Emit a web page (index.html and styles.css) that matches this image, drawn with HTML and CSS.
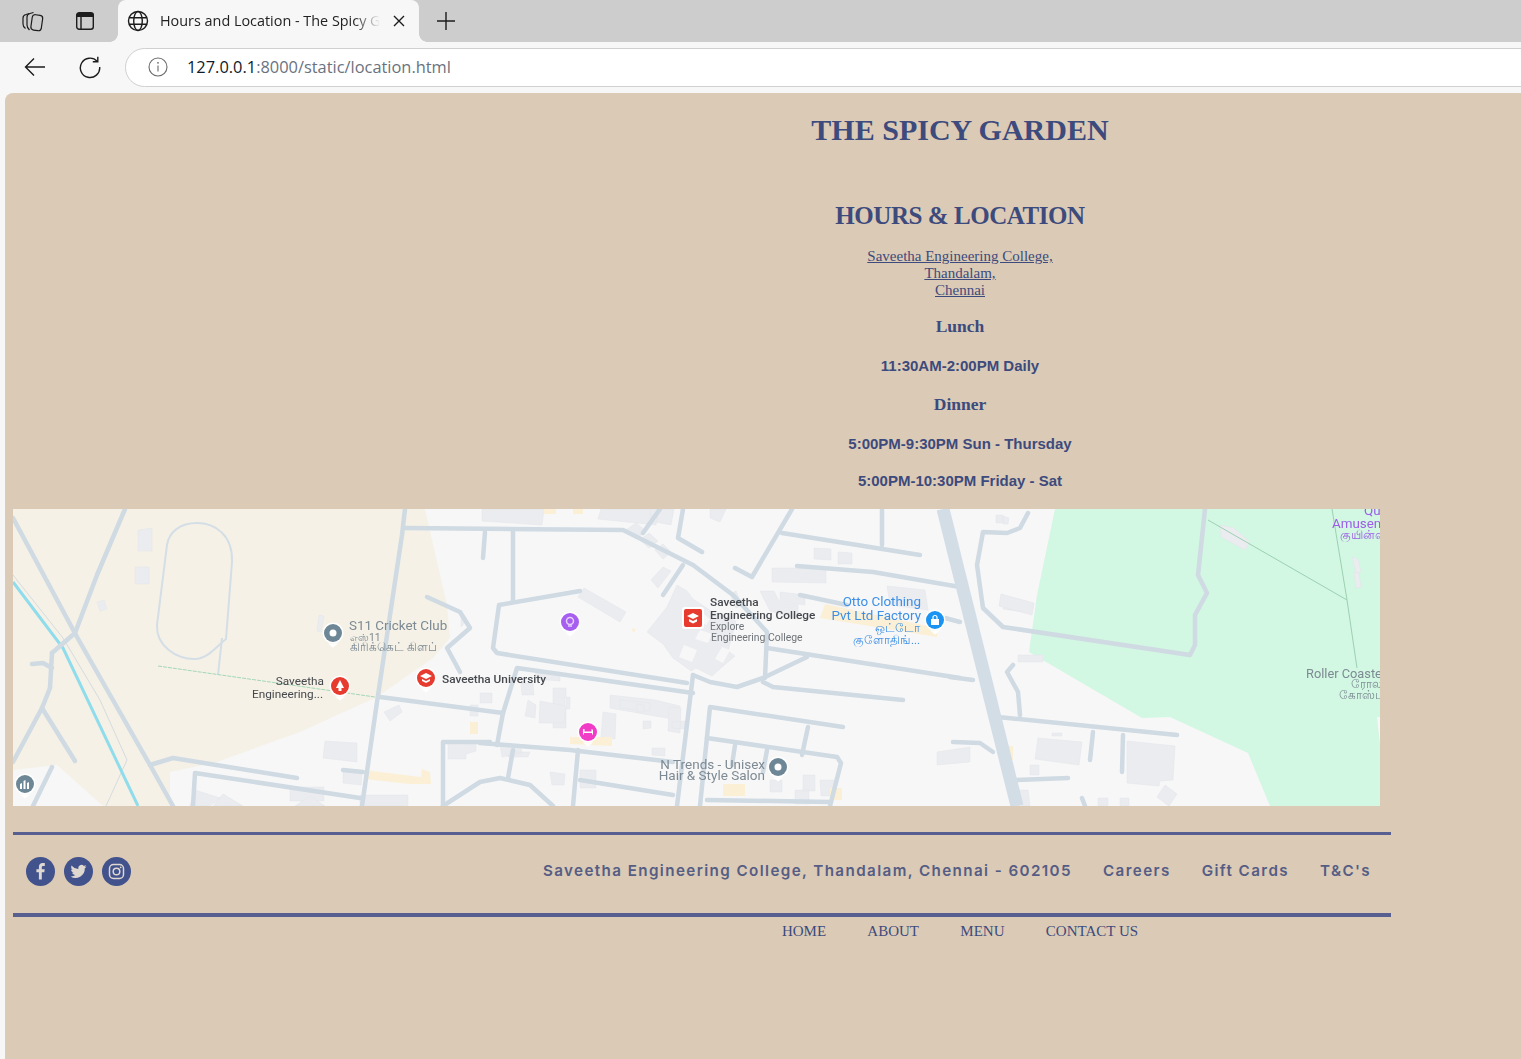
FILE: index.html
```html
<!DOCTYPE html>
<html lang="en">
<head>
<meta charset="utf-8">
<title>Hours and Location - The Spicy Garden</title>
<link rel="stylesheet" href="styles.css">
</head>
<body>
<header class="browser">
  <div class="tabstrip">
    <button class="strip-btn strip-btn-first" aria-label="Collections">
      <svg width="24" height="24" viewBox="0 0 24 24" class="ico thinline"><path d="M9.500 4.500L6 5.500C4 6 3 7.500 3 9v6c0 2 1 3.500 2.500 4.500"/><path d="M13.500 3.500L10 4.500C8 5 7 6.500 7 8v8c0 2 1 3.500 2.500 5"/><rect x="11.500" y="6" width="10.500" height="15.500" rx="3" transform="rotate(8 17 14)"/></svg>
    </button>
    <button class="strip-btn" aria-label="Tab actions">
      <svg width="24" height="24" viewBox="0 0 24 24" class="ico"><rect x="3.700" y="3.700" width="16.600" height="16.600" rx="2.500"/><path d="M5 4h14a1.500 1.500 0 0 1 1.500 1.500V8h-17V5.500A1.500 1.500 0 0 1 5 4z" class="fill"/><path d="M8 8v12"/></svg>
    </button>
    <div class="tab">
      <svg width="22" height="22" viewBox="0 0 22 22" class="ico globe"><circle cx="11" cy="11" r="9.500"/><ellipse cx="11" cy="11" rx="4.300" ry="9.500"/><path d="M2 7.800h18M2 14.200h18"/></svg>
      <span class="tab-title">Hours and Location - The Spicy Garden</span>
      <svg width="12" height="12" viewBox="0 0 12 12" class="ico close"><path d="M1 1l10 10M11 1L1 11"/></svg>
    </div>
    <svg width="20" height="20" viewBox="0 0 20 20" class="ico plus"><path d="M10 1v18M1 10h18"/></svg>
  </div>
  <div class="toolbar">
    <svg width="24" height="24" viewBox="0 0 24 24" class="ico back"><path d="M22 12H2.500M11 3.500L2.500 12l8.500 8.500"/></svg>
    <svg width="24" height="24" viewBox="0 0 24 24" class="ico reload"><path d="M19.200 6.300A9.700 9.700 0 1 0 21.700 12"/><path d="M19.800 1.800v5h-5"/></svg>
    <div class="omnibox">
      <svg width="20" height="20" viewBox="0 0 20 20" class="info"><circle cx="10" cy="10" r="9"/><path d="M10 8.500v6"/><circle class="dot" cx="10" cy="5.800" r="0.900"/></svg>
      <span class="url"><b class="host">127.0.0.1</b>:8000/static/location.html</span>
    </div>
  </div>
</header>

<div class="viewport">
  <main class="page">
    <h1 class="brand">THE SPICY GARDEN</h1>
    <h2 class="title">HOURS &amp; LOCATION</h2>
    <p class="address"><a href="#">Saveetha Engineering College,<br>Thandalam,<br>Chennai</a></p>
    <h3 class="meal meal-lunch">Lunch</h3>
    <p class="hours hours-lunch">11:30AM-2:00PM Daily</p>
    <h3 class="meal meal-dinner">Dinner</h3>
    <p class="hours hours-dinner">5:00PM-9:30PM Sun - Thursday</p>
    <p class="hours hours-last">5:00PM-10:30PM Friday - Sat</p>

    <svg class="map" width="1367" height="297" viewBox="13 509 1367 297" role="img" aria-label="Map">
      <defs>
        <g id="drop"><path d="M0 14.500l-5-4h10z" fill="#fff"/><circle r="10.500" fill="#fff"/></g>
      </defs>
      <rect x="13" y="509" width="1367" height="297" fill="#f7f7f8"/>
      <path class="land" d="M13 509H425L447 605 450 638 433 658 377 697 300 732 217 762 170 772V806H103L57 765 13 770z"/>
      <path class="park" d="M1055 509H1380V806H1270L1248 753 1170 717 1142 718 1029 652 1037 595z"/>
      <path fill="#f7f7f8" d="M1377 717l3 28v-28z"/>

      <g class="bld">
        <path d="M138 530l14-2v23h-14zM135 567h14v17h-14zM97 602l7-2 3 9-7 2zM319 615l5 1-3 16-4-1z"/>
        <path d="M325 741l32 2 0 19-34-4zM290 787h34v14h-34zM343 770l19 3-1 12-18-2z"/>
        <path d="M360 795h48v11h-48zM195 790l25 8-10 8h-20zM213 806l10-12 20 12zM295 806l15-10 15 10z"/>
        <path d="M448 742h28v9l-10 3v5h-18zM384 712l15-7 3 7-12 9zM470 705h8v11h-8zM461 618l5 3-5 6z"/>
        <path d="M482 509h62l-2 16-60-4zM601 509h57l-2 16-58-6zM650 509h24l-3 16-20-4zM710 509h16l-6 13-10-4z"/>
        <path d="M578 597l6-9 42 24-6 10zM651 580l12-13 8 4-13 17zM626 530l10-7 10 8-10 8zM640 540l9-7 9 8-9 7zM655 550l8-6 8 8-8 7z"/>
        <path d="M772 568h54v15l-54-1zM814 548l17 1v11l-17-1zM838 552l14 1v11h-14z"/>
        <path d="M647 632l20-25 10-22 10 6 6 8 18 12 25 10-8 30 7 5-14 12-9 8-16-8-5 3-18-13-10-14z"/>
        <path d="M730 594l6-3 6 14-6 3zM760 591h14l6 12 18 2 0 14-28-8zM780 592l25 3 0 10-25-3zM1006 599l28 5-3 9-28-4z"/>
        <path d="M1018 655l25 0 0 7-25 0z"/>
        <path d="M521 683h12l1 12h-12zM535 672h25v9l-24-2zM480 693h12v10h-12zM528 700l8 5-1 13-10-2zM553 688h13v40h-13zM570 697h-5v12h5z"/>
        <path d="M610 695l45 5 25 6-1 14-30-5-39-7zM603 712l13 2-1 25-14-2zM540 701l26 5-2 17h-25zM620 700l30 3 0 8-30-3z"/>
        <path d="M669 707l12 1-1 25-12-2zM637 704l7 1v7h-7zM643 721h8v7l-8 1zM672 722l13-1v8l-13-1zM652 748h13v8l-13-1z"/>
        <path d="M580 770h16v18h-16zM500 745h20l2 8-20 4zM510 752l20 0-2 5-20 0zM550 772l15 2-1 11h-12z"/>
        <path d="M770 780l12 0v12h-12zM803 775l12 0v16h-12zM820 780l14 0-1 16-12 0zM795 790l14 0 0 14-14 0z"/>
        <path d="M1038 738l44 4-3 23-44-6zM1127 741l48 5-2 34-13 1-1 5-22-2-10-1zM1165 785l12 9-8 12-12-9z"/>
        <path d="M1030 765l9 0v10h-9zM1014 790h14l2 16-15 0zM1098 798h10v8h-10zM1120 798h9v8h-9zM1052 733h10v3h-10z"/>
        <path d="M937 752l33-5 0 15-33 3z"/><path d="M1220 525l14 3 16 14-5 8-24-13zM1352 557l6 2 3 13-5 1zM1354 572l5 1 2 14-5 1z"/>
        <path d="M996 515l7 0 0 8-7 0zM1003 516l6 2-1 6-5 0z"/>
        <path d="M887 586l38 4 3 20-38-5z"/>
        <path d="M1001 594l33 9-2 12-33-9z"/>
      </g>
      <path class="cutout" d="M684 645l13 5-5 12-13-5zM700 630l12 4-4 9-13-4zM722 647l8 3-7 13-8-4zM700 611l10 8-4 6-10-6z"/>

      <g class="yellow">
        <path d="M470 722h8v12h-8zM364 779l45 5 22 0-1-12-8-3-1 8-57-7zM544 509h12v5h-12zM573 509h10v5h-10zM570 737h42v9l-42-2zM723 784h22v12h-22zM820 618l5-14 112 24 0 9zM999 748l5-2 0 9-5 0zM1005 746h8v14h-8z"/>
        <path d="M830 788h12v12h-12zM631 628l5 1-2 4z"/>
      </g>

      <polyline class="thin" points="13,575 63,638 100,700 127,760 106,806"/>
      <polyline class="river" points="13,582 63,648 138,806"/>

      <path class="track" d="M197 523C180 523 169 532 167 545L157 625C156 645 175 659 195 659 208 659 218 645 226 639L232 562C233 535 215 523 197 523z"/>
      <polyline class="track" points="222,638 218,675"/>
      <polyline class="trail" points="158,666 375,697"/>
      <polyline class="trail solid" points="1208,520 1347,600"/>
      <polyline class="trail solid" points="1332,509 1347,600 1357,668"/>

      <g class="roads">
        <polyline points="13,518 77,637 150,765 173,806"/>
        <polyline points="125,509 97,575 75,633 52,653"/>
        <polyline points="52,653 50,688 42,708 13,762"/>
        <polyline points="32,664 43,663 52,668"/>
        <polyline points="42,708 75,761"/>
        <polyline points="52,767 33,806"/>
        <polyline points="405,509 402,535 377,702 362,806"/>
        <polyline points="405,528 623,530 693,565 733,595 767,632 765,678"/>
        <polyline points="380,697 503,713"/>
        <polyline points="503,713 517,668 693,693"/>
        <polyline points="503,713 497,745"/>
        <polyline points="687,683 497,653 493,648 499,605 580,591"/>
        <polyline points="513,532 513,602"/>
        <polyline points="485,532 483,558"/>
        <polyline points="693,675 677,806"/>
        <polyline points="693,675 710,682 737,687 763,678 807,657"/>
        <polyline points="767,648 960,678"/>
        <polyline points="763,682 773,687 903,700"/>
        <polyline points="843,727 710,707 700,806"/>
        <polyline points="707,738 837,757 841,763 830,806"/>
        <polyline points="808,727 802,755"/>
        <polyline points="735,745 732,765"/>
        <polyline points="767,750 763,772"/>
        <polyline points="480,743 570,750 673,762"/>
        <polyline points="578,750 573,806"/>
        <polyline points="580,780 673,795"/>
        <polyline points="513,750 508,778"/>
        <polyline points="443,806 443,742 490,742"/>
        <polyline points="443,806 480,782 500,778 530,785 553,806"/>
        <polyline points="707,800 830,802"/>
        <polyline points="683,509 678,538 702,552"/>
        <polyline points="792,509 752,577 735,568"/>
        <polyline points="782,533 920,555"/>
        <polyline points="882,509 882,545"/>
        <polyline points="797,566 873,572 960,587"/>
        <polyline points="800,595 847,605"/>
        <polyline points="683,565 663,595"/>
        <polyline points="660,509 643,533"/>
        <polyline points="1028,513 1020,528 1007,533 983,532 977,565 983,608 1003,627 1190,655 1195,645 1195,615 1207,593 1198,575 1205,509"/>
        <polyline points="998,717 1177,735"/>
        <polyline points="1093,732 1090,760"/>
        <polyline points="1123,735 1122,772"/>
        <polyline points="1020,715 1018,692 1007,672 1013,665"/>
        <polyline points="953,742 980,743 993,752"/>
        <polyline points="1017,780 1068,778"/>
        <polyline points="945,618 960,622"/>
        <polyline points="950,677 973,680"/>
        <polyline points="1082,798 1085,806"/>
        <polyline points="150,765 173,758 297,778"/>
        <polyline points="193,806 195,773 360,798"/>
        <polyline points="343,770 363,772"/>
        <polyline points="427,597 460,612 470,628 447,648 460,672"/>
      </g>
      <polyline class="highway" points="943,509 1017,806"/>

      <g class="lbl grey-l">
        <text x="349" y="630" class="t13">S11 Cricket Club</text>
        <text x="350" y="641" class="t10">எஸ்11</text>
        <text x="350" y="651" class="t115">கிரிக்கெட் கிளப்</text>
        <text x="765" y="769" class="t135 end">N Trends - Unisex</text>
        <text x="765" y="780" class="t135 end">Hair &amp; Style Salon</text>
        <text x="1306" y="678" class="t12">Roller Coaster</text>
        <text x="1351" y="688" class="t115">ரோலர்</text>
        <text x="1339" y="699" class="t115">கோஸ்டர்</text>
      </g>
      <g class="lbl dark">
        <text x="324" y="685" class="t118 end">Saveetha</text>
        <text x="323" y="698" class="t118 end">Engineering...</text>
        <text x="442" y="683" class="t118 med">Saveetha University</text>
        <text x="710" y="606" class="t118 med">Saveetha</text>
        <text x="710" y="619" class="t118 med">Engineering College</text>
      </g>
      <g class="lbl grey-d">
        <text x="710" y="630" class="t10">Explore</text>
        <text x="711" y="641" class="t10">Engineering College</text>
      </g>
      <g class="lbl blue">
        <text x="921" y="606" class="t13 end">Otto Clothing</text>
        <text x="921" y="620" class="t13 end">Pvt Ltd Factory</text>
        <text x="920" y="632" class="t115 end">ஒட்டோ</text>
        <text x="920" y="644" class="t115 end">குளோதிங்...</text>
      </g>
      <g class="lbl purple">
        <text x="1364" y="515" class="t13">Qu</text>
        <text x="1332" y="528" class="t13">Amusem</text>
        <text x="1340" y="539" class="t115">குயின்ஸ்</text>
      </g>

      <use href="#drop" x="333" y="633"/><circle cx="333" cy="633" r="9" fill="#6d8797"/><circle cx="333" cy="633" r="3.500" fill="#fff"/>
      <use href="#drop" x="340" y="686"/><circle cx="340" cy="686" r="9" fill="#e63b2e"/><path d="M340 680l4 8h-2.500v3h-3v-3H336z" fill="#fff"/>
      <use href="#drop" x="426" y="678"/><circle cx="426" cy="678" r="9" fill="#e63b2e"/><path d="M420 676l6-3 6 3-6 3zM422 679l4 2 4-2v2l-4 2-4-2z" fill="#fff"/>
      <use href="#drop" x="570" y="622"/><circle cx="570" cy="622" r="9" fill="#a75ff0"/><circle cx="570" cy="621" r="3.500" fill="none" stroke="#e6d2fb" stroke-width="1.500"/><path d="M568 626h4" stroke="#e6d2fb" stroke-width="1.500"/>
      <rect x="682" y="607" width="22" height="22" rx="3" fill="#fff"/><rect x="684" y="609" width="18" height="18" rx="2" fill="#e63b2e"/><path d="M687 616l6-3 6 3-6 3zM689 619l4 2 4-2v2.500l-4 2-4-2z" fill="#fff"/>
      <use href="#drop" x="935" y="620"/><circle cx="935" cy="620" r="9" fill="#1a93f2"/><path d="M931 619h8v6h-8z" fill="#fff"/><path d="M933 619v-1.500a2 2 0 0 1 4 0v1.500" fill="none" stroke="#fff" stroke-width="1.200"/>
      <use href="#drop" x="588" y="732"/><circle cx="588" cy="732" r="9" fill="#f03cc6"/><path d="M583 729h1.500v2.500h7V729a1.500 1.500 0 0 1 1.500 1.500v4h-1v-1.500h-8v1.500h-1z" fill="#fff"/>
      <use href="#drop" x="778" y="767"/><circle cx="778" cy="767" r="9" fill="#6d8797"/><circle cx="778" cy="767" r="3.500" fill="#fff"/>
      <use href="#drop" x="25" y="784"/><circle cx="25" cy="784" r="9" fill="#6d8797"/><path d="M20 789v-5l2-1v6zM23.500 789v-8l2-1v9zM27 789v-6l2-1v7z" fill="#fff"/>
    </svg>

    <footer class="site-footer">
      <div class="socials">
        <a class="social" href="#" aria-label="Facebook"><svg width="29" height="29" viewBox="0 0 29 29"><path class="glyph" d="M15.800 22.500v-7.300h2.500l.4-2.900h-2.900v-1.800c0-.8.300-1.400 1.500-1.400h1.500V6.100c-.3 0-1.200-.1-2.200-.1-2.200 0-3.700 1.300-3.700 3.800v2.500h-2.500v2.900h2.500v7.300z"/></svg></a>
        <a class="social" href="#" aria-label="Twitter"><svg width="29" height="29" viewBox="0 0 29 29"><path class="glyph" d="M22.500 9.400c-.6.300-1.200.4-1.900.5.700-.4 1.200-1 1.400-1.800-.6.400-1.300.6-2.100.8a3.300 3.300 0 0 0-5.600 3c-2.700-.1-5.100-1.400-6.700-3.400-.9 1.500-.4 3.400 1 4.400-.5 0-1-.2-1.500-.4 0 1.600 1.100 2.900 2.600 3.200-.5.100-1 .2-1.500.1.400 1.300 1.600 2.200 3.100 2.300a6.600 6.600 0 0 1-4.800 1.300 9.300 9.300 0 0 0 14.300-8.200c.7-.4 1.300-1 1.700-1.600z"/></svg></a>
        <a class="social" href="#" aria-label="Instagram"><svg width="29" height="29" viewBox="0 0 29 29"><rect class="ring" x="7.500" y="7.500" width="14" height="14" rx="4"/><circle class="ring" cx="14.500" cy="14.500" r="3.300"/><circle class="glyph" cx="18.700" cy="10.300" r="0.900"/></svg></a>
      </div>
      <nav class="foot-links">
        <a href="#">Saveetha Engineering College, Thandalam, Chennai - 602105</a>
        <a href="#">Careers</a>
        <a href="#">Gift Cards</a>
        <a href="#">T&amp;C's</a>
      </nav>
    </footer>

    <ul class="bottom-nav">
      <li><a href="#">HOME</a></li>
      <li><a href="#">ABOUT</a></li>
      <li><a href="#">MENU</a></li>
      <li><a href="#">CONTACT US</a></li>
    </ul>
  </main>
</div>
</body>
</html>
```

FILE: styles.css
```css
* { box-sizing: border-box; }

html, body {
  margin: 0;
  height: 100%;
  overflow: hidden;
}

body {
  display: flex;
  flex-direction: column;
  background: #f7f7f7;
}

/* Browser frame */
.browser { flex: none; }

.ico {
  fill: none;
  stroke: #1c1c1c;
  stroke-width: 1.4;
  display: block;
  flex: none;
}
.ico .fill { fill: #1c1c1c; stroke: none; }
.thinline { stroke-width: 1.200; }

.tabstrip {
  display: flex;
  align-items: center;
  height: 42px;
  background: #cdcdcd;
}

.strip-btn {
  width: 24px;
  height: 24px;
  padding: 0;
  margin-left: 29px;
  border: 0;
  background: none;
}
.strip-btn-first { margin-left: 20px; }

.tab {
  position: relative;
  display: flex;
  align-items: center;
  width: 301px;
  height: 42px;
  margin-left: 21px;
  padding: 0 14px 0 9px;
  background: #f7f7f7;
  border-radius: 8px 8px 0 0;
}
.tab::before, .tab::after {
  content: "";
  position: absolute;
  bottom: 0;
  width: 8px;
  height: 8px;
}
.tab::before {
  left: -8px;
  background: radial-gradient(circle at 0 0, #cdcdcd 7.5px, #f7f7f7 8px);
}
.tab::after {
  right: -8px;
  background: radial-gradient(circle at 100% 0, #cdcdcd 7.5px, #f7f7f7 8px);
}

.tab-title {
  flex: 1;
  margin-left: 11px;
  padding-bottom: 2px;
  overflow: hidden;
  white-space: nowrap;
  font: 14.4px "Open Sans", sans-serif;
  color: #222;
  -webkit-mask-image: linear-gradient(90deg, #000 88%, transparent 100%);
  mask-image: linear-gradient(90deg, #000 88%, transparent 100%);
}

.close { margin-left: 13px; }
.plus { margin-left: 17px; }

.toolbar {
  display: flex;
  align-items: center;
  height: 51px;
  background: #f7f7f7;
  padding-left: 23px;
  padding-bottom: 1px;
}
.reload { margin-left: 31px; }

.omnibox {
  display: flex;
  align-items: center;
  flex: 1;
  height: 39px;
  margin-left: 23px;
  margin-right: -40px;
  padding-left: 22px;
  background: #fff;
  border: 1px solid #d0d0d0;
  border-radius: 20px;
}
.info { fill: none; stroke: #6b6b6b; stroke-width: 1.1; }
.info .dot { fill: #6b6b6b; stroke: none; }

.url {
  margin-left: 19px;
  padding-bottom: 1px;
  font: 16.4px "Open Sans", sans-serif;
  color: #6a7280;
  white-space: nowrap;
}
.host { font-weight: 400; color: #0f1a2a; }

/* Page */
.viewport {
  flex: 1;
  min-height: 0;
  margin-left: 5px;
  overflow: hidden;
  background: #dbcab5;
  border-top-left-radius: 8px;
}

.page {
  width: 1894px;
  margin: 0 8px;
  color: #3d4a7d;
  text-align: center;
  font-family: "Liberation Serif", serif;
}

.brand {
  margin: 0;
  padding-top: 19px;
  font-size: 30px;
  line-height: 36px;
  font-weight: 700;
}

.title {
  margin: 54px 0 0;
  font-size: 25px;
  line-height: 28px;
  font-weight: 700;
  letter-spacing: -0.45px;
}

.address {
  margin: 18px 0 0;
  font-size: 15px;
  line-height: 17px;
}
.address a { color: inherit; }

.meal {
  margin: 0;
  font-size: 17.5px;
  line-height: 20px;
  font-weight: 700;
}
.meal-lunch { margin-top: 17px; }
.meal-dinner { margin-top: 18px; }

.hours {
  margin: 0;
  font: 700 15px/20px "Liberation Sans", sans-serif;
}
.hours-lunch { margin-top: 20px; }
.hours-dinner { margin-top: 20px; }
.hours-last { margin-top: 17px; }

.map {
  display: block;
  margin-top: 18px;
  filter: blur(0.6px);
}

.land { fill: #f5f1e6; }
.park { fill: #d2f7e2; }
.bld { fill: #ebecef; stroke: #e3e4e8; stroke-width: .5; }
.cutout { fill: #f7f7f8; }
.yellow { fill: #fbf0d6; }
.roads polyline {
  fill: none;
  stroke: #cfdae3;
  stroke-width: 4.500;
  stroke-linecap: round;
  stroke-linejoin: round;
}
.highway { fill: none; stroke: #d2dde5; stroke-width: 13; }
.river { fill: none; stroke: #8fdcec; stroke-width: 3; }
.thin { fill: none; stroke: #d5dbdf; stroke-width: 1; }
.track { fill: none; stroke: #d4dee6; stroke-width: 2; }
.trail { fill: none; stroke: #a3d8b8; stroke-width: 1; stroke-dasharray: 4 1; }
.trail.solid { stroke: #9dd0b2; stroke-dasharray: none; }

.lbl text { font-family: Roboto, "Noto Sans", "DejaVu Sans", sans-serif; }
.t10 { font-size: 10.400px; }
.t115 { font-size: 11.500px; }
.t118 { font-size: 11.800px; }
.t12 { font-size: 12.800px; }
.t13 { font-size: 13.400px; }
.t135 { font-size: 13.500px; }
.end { text-anchor: end; }
.med { font-weight: 500; }
.grey-l { fill: #7d8a93; }
.grey-d { fill: #6f7478; }
.dark { fill: #45484c; }
.blue { fill: #3d8fe6; }
.purple { fill: #9c5ee8; }

/* Footer */
.site-footer {
  display: flex;
  align-items: center;
  justify-content: space-between;
  width: 1378px;
  height: 85px;
  margin-top: 26px;
  padding: 0 20px 6px 13px;
  border-top: 3px solid #565f8f;
  border-bottom: 4px solid #565f8f;
}

.socials { display: flex; gap: 9px; }

.social {
  display: block;
  width: 29px;
  height: 29px;
  border-radius: 50%;
  background: #41528c;
}
.social svg { display: block; }
.glyph { fill: #dfd8d0; }
.ring { fill: none; stroke: #dfd8d0; stroke-width: 1.500; }

.foot-links {
  display: flex;
  gap: 31px;
  font: 600 15.2px/20px Inter, "Liberation Sans", sans-serif;
  letter-spacing: 1.4px;
}
.foot-links a { color: #555d85; text-decoration: none; }

.bottom-nav {
  display: flex;
  justify-content: center;
  gap: 41.300px;
  margin: 6px 0 0;
  padding: 0;
  list-style: none;
  font-size: 15px;
  line-height: 17px;
}
.bottom-nav a { color: #3d4a7d; text-decoration: none; }
```
